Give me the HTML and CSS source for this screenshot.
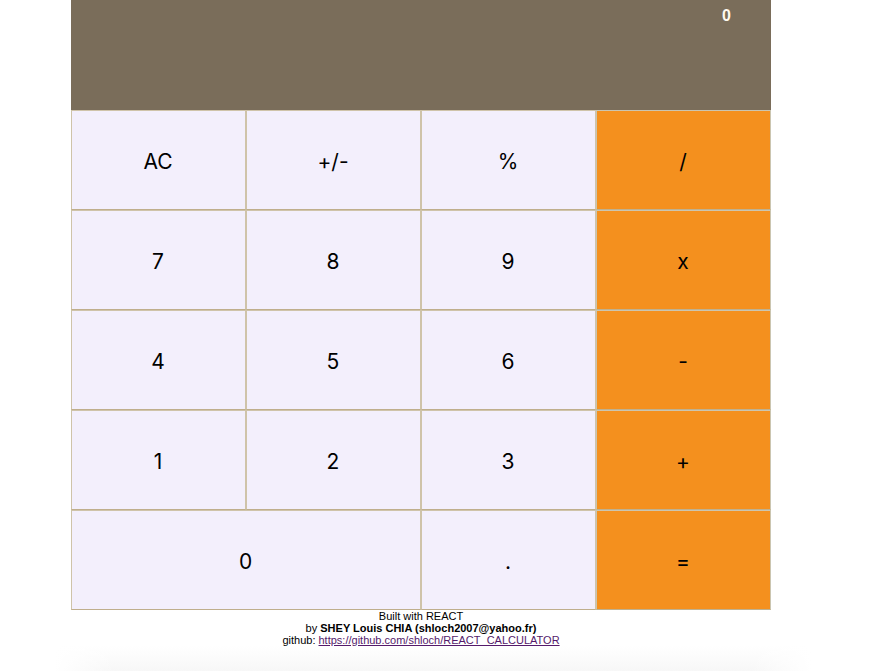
FILE: index.html
```html
<!DOCTYPE html>
<html lang="en">
<head>
<meta charset="utf-8">
<title>Calculator</title>
<link rel="stylesheet" href="styles.css">
</head>
<body>
<main class="calculator">
  <output class="display">0</output>
  <div class="keys">
    <button class="key">AC</button><button class="key">+/-</button><button class="key">%</button><button class="key operator">/</button>
    <button class="key">7</button><button class="key">8</button><button class="key">9</button><button class="key operator">x</button>
    <button class="key">4</button><button class="key">5</button><button class="key">6</button><button class="key operator">-</button>
    <button class="key">1</button><button class="key">2</button><button class="key">3</button><button class="key operator">+</button>
    <button class="key wide">0</button><button class="key">.</button><button class="key operator">=</button>
  </div>
</main>
<footer class="credits">
  <div>Built with REACT</div>
  <div>by <b>SHEY Louis CHIA (shloch2007@yahoo.fr)</b></div>
  <div>github: <a href="https://github.com/shloch/REACT_CALCULATOR">https://github.com/shloch/REACT_CALCULATOR</a></div>
</footer>
<div class="shade"></div>
</body>
</html>
```

FILE: styles.css
```css
* {
  box-sizing: border-box;
}

body {
  display: flex;
  flex-direction: column;
  min-height: 100vh;
  margin: 0;
  padding: 0 99px 0 71px;
  background: #fff;
  color: #000;
  font-family: "Liberation Sans", Arial, sans-serif;
}

.display {
  display: block;
  height: 110px;
  padding: 6px 40px 0 0;
  background: #7a6d5a;
  color: #fffaf0;
  font: bold 16px/20px "Liberation Sans", Arial, sans-serif;
  text-align: right;
}

.keys {
  display: grid;
  grid-template-columns: repeat(4, 1fr);
  grid-auto-rows: 100px;
}

.key {
  margin: 0;
  padding: 3px 1px 0 0;
  border: 1px solid #cfc3a9;
  border-bottom-color: #bfae8c;
  border-radius: 0;
  background: #f3effc;
  color: #000;
  font: 21px/24px Inter, sans-serif;
}

.operator {
  border-color: #cbc5b0;
  border-bottom-color: #bfb08e;
  background: #f4901e;
}

.wide {
  grid-column: span 2;
}

.credits {
  font-size: 11px;
  line-height: 12px;
  text-align: center;
}

.credits a {
  color: #551a6b;
}

.shade {
  flex: 1;
  min-height: 24px;
  margin: 0 -40px 0 -16px;
  background:
    linear-gradient(to right, #fff, transparent 60px, transparent calc(100% - 60px), #fff),
    linear-gradient(#fff, #f7f7f7);
}
```
